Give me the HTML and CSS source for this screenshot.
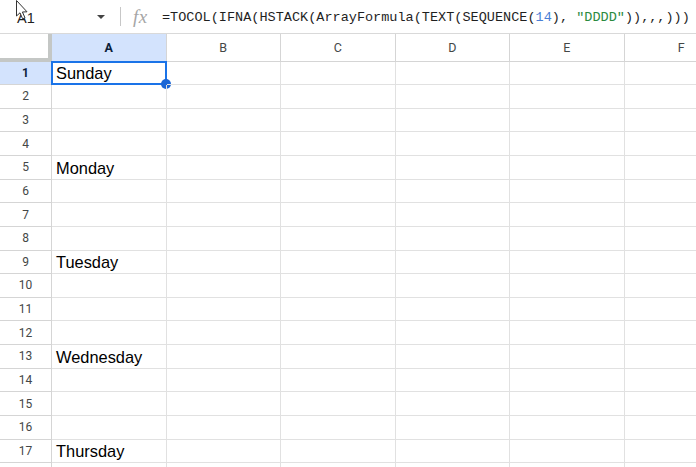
FILE: index.html
```html
<!DOCTYPE html>
<html>
<head>
<meta charset="utf-8">
<link rel="stylesheet" href="styles.css">
</head>
<body>
<div class="app">
  <div class="formula-bar">
    <div class="name-box">
      <span class="name-text">A1</span>
      <span class="caret"></span>
    </div>
    <div class="sep"></div>
    <span class="fx">fx</span>
    <span class="formula">=TOCOL(IFNA(HSTACK(ArrayFormula(TEXT(SEQUENCE(<span class="num">14</span>), <span class="str">"DDDD"</span>)),,,)))</span>
    <svg class="cursor" width="14" height="22" viewBox="0 0 14 22"><path d="M1.5 0.5 L1.5 16 L5 12.8 L7.6 18.8 L10 17.8 L7.4 12 L12 11.8 Z" fill="#fff" stroke="#333" stroke-width="1" stroke-linejoin="round"/></svg>
  </div>
  <div class="sheet">
    <div class="corner"></div>
    <div class="colhead sel">A</div>
    <div class="colhead">B</div>
    <div class="colhead">C</div>
    <div class="colhead">D</div>
    <div class="colhead">E</div>
    <div class="colhead">F</div>

    <div class="rowhead sel">1</div><div class="cell active">Sunday<div class="selection"><span class="handle"></span></div></div><div class="cell"></div><div class="cell"></div><div class="cell"></div><div class="cell"></div><div class="cell"></div>
    <div class="rowhead">2</div><div class="cell"></div><div class="cell"></div><div class="cell"></div><div class="cell"></div><div class="cell"></div><div class="cell"></div>
    <div class="rowhead">3</div><div class="cell"></div><div class="cell"></div><div class="cell"></div><div class="cell"></div><div class="cell"></div><div class="cell"></div>
    <div class="rowhead">4</div><div class="cell"></div><div class="cell"></div><div class="cell"></div><div class="cell"></div><div class="cell"></div><div class="cell"></div>
    <div class="rowhead">5</div><div class="cell">Monday</div><div class="cell"></div><div class="cell"></div><div class="cell"></div><div class="cell"></div><div class="cell"></div>
    <div class="rowhead">6</div><div class="cell"></div><div class="cell"></div><div class="cell"></div><div class="cell"></div><div class="cell"></div><div class="cell"></div>
    <div class="rowhead">7</div><div class="cell"></div><div class="cell"></div><div class="cell"></div><div class="cell"></div><div class="cell"></div><div class="cell"></div>
    <div class="rowhead">8</div><div class="cell"></div><div class="cell"></div><div class="cell"></div><div class="cell"></div><div class="cell"></div><div class="cell"></div>
    <div class="rowhead">9</div><div class="cell">Tuesday</div><div class="cell"></div><div class="cell"></div><div class="cell"></div><div class="cell"></div><div class="cell"></div>
    <div class="rowhead">10</div><div class="cell"></div><div class="cell"></div><div class="cell"></div><div class="cell"></div><div class="cell"></div><div class="cell"></div>
    <div class="rowhead">11</div><div class="cell"></div><div class="cell"></div><div class="cell"></div><div class="cell"></div><div class="cell"></div><div class="cell"></div>
    <div class="rowhead">12</div><div class="cell"></div><div class="cell"></div><div class="cell"></div><div class="cell"></div><div class="cell"></div><div class="cell"></div>
    <div class="rowhead">13</div><div class="cell">Wednesday</div><div class="cell"></div><div class="cell"></div><div class="cell"></div><div class="cell"></div><div class="cell"></div>
    <div class="rowhead">14</div><div class="cell"></div><div class="cell"></div><div class="cell"></div><div class="cell"></div><div class="cell"></div><div class="cell"></div>
    <div class="rowhead">15</div><div class="cell"></div><div class="cell"></div><div class="cell"></div><div class="cell"></div><div class="cell"></div><div class="cell"></div>
    <div class="rowhead">16</div><div class="cell"></div><div class="cell"></div><div class="cell"></div><div class="cell"></div><div class="cell"></div><div class="cell"></div>
    <div class="rowhead">17</div><div class="cell">Thursday</div><div class="cell"></div><div class="cell"></div><div class="cell"></div><div class="cell"></div><div class="cell"></div>
    <div class="rowhead"></div><div class="cell"></div><div class="cell"></div><div class="cell"></div><div class="cell"></div><div class="cell"></div><div class="cell"></div>
  </div>
</div>
</body>
</html>
```
FILE: styles.css
```css
html, body {
  margin: 0;
  padding: 0;
  background: #fff;
  overflow: hidden;
}
.app {
  width: 696px;
  height: 467px;
  overflow: hidden;
  font-family: "Liberation Sans", Arial, sans-serif;
}
.formula-bar {
  position: relative;
  height: 33px;
  border-bottom: 1px solid #d9d9d9;
  display: flex;
  align-items: center;
  box-sizing: content-box;
}
.name-box {
  width: 110px;
  display: flex;
  align-items: center;
  padding-left: 17px;
  box-sizing: border-box;
  height: 100%;
}
.name-text {
  font-size: 14.5px;
  color: #1f1f1f;
  width: 80px;
  padding-top: 2px;
}
.caret {
  width: 0;
  height: 0;
  border-left: 4px solid transparent;
  border-right: 4px solid transparent;
  border-top: 4px solid #444;
  margin-top: 1px;
}
.sep {
  width: 1px;
  height: 19px;
  background: #c7c7c7;
  margin-left: 10px;
}
.fx {
  font-family: "Liberation Serif", serif;
  font-style: italic;
  font-size: 19px;
  color: #a6a6a6;
  margin-left: 12px;
  width: 29px;
  letter-spacing: 0.5px;
}
.formula {
  font-family: "Liberation Mono", "DejaVu Sans Mono", monospace;
  font-size: 13.54px;
  color: #1f1f1f;
  white-space: pre;
  padding-top: 1px;
}
.num { color: #4a7fd6; }
.str { color: #2a8a3e; }
.cursor {
  position: absolute;
  left: 15px;
  top: 0;
}
.sheet {
  display: grid;
  grid-template-columns: 52px repeat(6, 114.5px);
  grid-template-rows: 27.5px repeat(18, 23.625px);
}
.corner {
  border-right: 4px solid #c4c7c5;
  border-bottom: 4px solid #c4c7c5;
  box-sizing: border-box;
}
.colhead {
  border-right: 1px solid #d5d5d5;
  border-bottom: 1px solid #d5d5d5;
  display: flex;
  align-items: center;
  justify-content: center;
  font-size: 12.5px;
  color: #444746;
  font-family: "Roboto", "Liberation Sans", sans-serif;
  box-sizing: border-box;
  padding-top: 1px;
}
.colhead.sel, .rowhead.sel {
  background: #d3e3fd;
  color: #0b1d3a;
  font-weight: bold;
}
.rowhead {
  border-right: 1px solid #d5d5d5;
  border-bottom: 1px solid #d5d5d5;
  display: flex;
  align-items: center;
  justify-content: center;
  font-size: 12px;
  color: #444746;
  font-family: "Roboto", "Liberation Sans", sans-serif;
  box-sizing: border-box;
}
.cell {
  position: relative;
  border-right: 1px solid #e1e1e1;
  border-bottom: 1px solid #e1e1e1;
  box-sizing: border-box;
  display: flex;
  align-items: flex-end;
  padding-left: 4px;
  padding-bottom: 1px;
  font-size: 16.4px;
  color: #000;
  white-space: nowrap;
  line-height: 19px;
}
.selection {
  position: absolute;
  left: -1px;
  top: -1px;
  right: -1px;
  bottom: -1px;
  border: 2px solid #1a73e8;
}
.handle {
  position: absolute;
  right: -6px;
  bottom: -6px;
  width: 10px;
  height: 10px;
  border-radius: 50%;
  background: #1a66d6;
}
```
